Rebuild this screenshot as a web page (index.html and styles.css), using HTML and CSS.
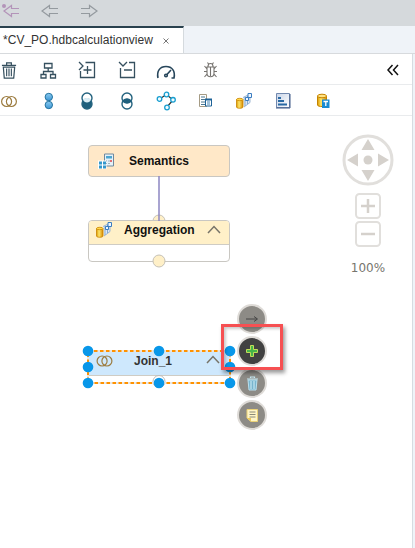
FILE: index.html
```html
<!DOCTYPE html>
<html lang="en">
<head>
<meta charset="utf-8">
<title>CV_PO.hdbcalculationview</title>
<link rel="stylesheet" href="styles.css">
</head>
<body>
<svg class="defs" width="0" height="0" aria-hidden="true">
  <defs>
    <linearGradient id="gold"><stop offset="0" stop-color="#d99a00"/><stop offset=".4" stop-color="#ffe56b"/><stop offset="1" stop-color="#d58a00"/></linearGradient>
    <linearGradient id="blue" x2="0" y2="1"><stop offset="0" stop-color="#8bcbf1"/><stop offset="1" stop-color="#3c96d4"/></linearGradient>
    <linearGradient id="list" x2="1" y2="1"><stop offset="0" stop-color="#c8d4e8"/><stop offset="1" stop-color="#fff"/></linearGradient>
    <symbol id="rings" viewBox="0 0 16 12">
      <g fill="none" stroke="#9c7c40" stroke-width="1.2"><circle cx="5.6" cy="6" r="5"/><circle cx="10.4" cy="6" r="5"/></g>
    </symbol>
    <symbol id="aggr" viewBox="0 0 16 16">
      <path d="M7 4.500 14 1v8.500L8 14" fill="#dce9f5" stroke="#9bb5d2"/>
      <path d="M9 4v9M11.500 3v8" stroke="#86a8cf"/>
      <path d="M9.500 4.500h3v3h-3zM12 .5h3.500v4H12z" fill="#eef7ff" stroke="#3b7cc0"/>
      <path d="M.5 6.500v7.500c0 1.700 6.500 1.700 6.500 0V6.500z" fill="url(#gold)" stroke="#c98400" stroke-width=".8"/>
      <ellipse cx="3.750" cy="6.500" rx="3.250" ry="1.200" fill="#ffd84c" stroke="#c98400" stroke-width=".8"/>
    </symbol>
    <symbol id="bin" viewBox="0 0 16 18">
      <path d="M.5 3.500h15M5.500 3V1h5v2" fill="none" stroke="currentColor" stroke-width="1.300"/>
      <path d="M2 5.500 3 17h10l1-11.500z" fill="none" stroke="currentColor" stroke-width="1.300"/>
      <path d="M5.500 7V15M8 7V15M10.500 7V15" stroke="currentColor" stroke-width="1.200"/>
    </symbol>
  </defs>
</svg>
<div class="window">
  <header class="navbar">
    <svg class="back last" width="18" height="14" viewBox="0 0 18 14"><path d="M17 4.500H9.500V1.500L2 7l7.500 5.500v-3H17"/><circle cx="2" cy="2" r="2"/></svg>
    <svg width="18" height="14" viewBox="0 0 18 14"><path d="M17 4.500H8.500V1.500L1 7l7.500 5.500v-3H17"/></svg>
    <svg width="18" height="14" viewBox="0 0 18 14"><path d="M1 4.500h8.500V1.500L17 7l-7.500 5.500v-3H1"/></svg>
  </header>
  <nav class="tabs">
    <div class="tab"><span class="tab-name">*CV_PO.hdbcalculationview</span><svg width="6" height="6" viewBox="0 0 6 6"><path d="M.5.5l5 5M5.500.5l-5 5"/></svg></div>
  </nav>
  <main class="editor">
    <div class="toolbar actions">
      <svg class="ico dark" viewBox="0 0 24 24"><use href="#bin" x="4" y="4" width="16" height="17"/></svg>
      <svg class="ico line" viewBox="0 0 24 24"><path d="M8.500 5.500h7.500v4.500H8.500zM5 16.500h5v3.500H5zM14.500 16.500h5v3.500h-5zM12.200 10v3.500M7.500 16.500v-3h9.500v3"/></svg>
      <svg class="ico line" viewBox="0 0 24 24"><path d="M10.500 4.500h9v15h-14V13M12.500 8v8M8.500 12h8M4 4l4 4-4 4"/></svg>
      <svg class="ico line" viewBox="0 0 24 24"><path d="M14 4.500h5.500v15h-14V10M9 12h8M4 4l4 4 4-4"/></svg>
      <svg class="ico line gauge" viewBox="0 0 24 24"><path d="M4 20C2.500 13 6 8.500 12 8.500S21.500 13 20 20h-2.500"/><path d="M12.500 17 17 12"/><circle cx="12" cy="17.500" r="1.300"/></svg>
      <svg class="ico bug" viewBox="0 0 24 24"><path d="M9 9h7v6c0 5-7 5-7 0zM12.500 9v9M10 8.500c0-4 5-4 5 0M9 11 6.500 8M16 11l2.500-3M9 13.500H6M16 13.500h3M9 16l-2.500 3M16 16l2.500 3M10.500 6 9.500 4.500M14.500 6l1-1.500"/></svg>
      <svg class="collapse" width="12" height="12" viewBox="0 0 12 12"><path d="M5.500 1 1 6l4.500 5M11 1 6.500 6l4.500 5"/></svg>
    </div>
    <div class="toolbar nodes">
      <svg class="ico" viewBox="0 0 24 24"><use href="#rings" x="4" y="6.500" width="16" height="12"/></svg>
      <svg class="ico" viewBox="0 0 24 24"><g fill="url(#blue)" stroke="#24739f"><circle cx="12.800" cy="8" r="3.700"/><circle cx="12.800" cy="16" r="3.700"/></g></svg>
      <svg class="ico" viewBox="0 0 24 24"><g fill="none" stroke="#24637f" stroke-width="1.400"><circle cx="12" cy="9" r="5"/><circle cx="12" cy="15" r="5" fill="#1f607d"/></g><path d="M8 10.500c2-2 6-2 8 0-1 4-7 4-8 0z" fill="#d9edf5"/></svg>
      <svg class="ico" viewBox="0 0 24 24"><g fill="none" stroke="#24637f" stroke-width="1.400"><circle cx="12" cy="9" r="5"/><circle cx="12" cy="15" r="5"/></g><path d="M7.500 12c2-3 7-3 9 0-2 3-7 3-9 0z" fill="#1f607d"/></svg>
      <svg class="ico" viewBox="0 0 24 24"><path d="m5.500 10 7-4.500 6.500 5.500-6 7" fill="none" stroke="#333" stroke-width="1.200"/><g fill="#effbff" stroke="#189ed0" stroke-width="1.300"><circle cx="5.500" cy="10" r="2.300"/><circle cx="12.500" cy="5.500" r="2.300"/><circle cx="19" cy="10.800" r="2.300"/><circle cx="13" cy="18.500" r="2.300"/></g></svg>
      <svg class="ico" viewBox="0 0 24 24"><path d="M6.500 5.500h7v12h-7z" fill="#fff" stroke="#a59b84"/><path d="M8 8h4M8 10.500h4M8 13h4M8 15.500h4" stroke="#4d7891"/><path d="M12.500 10.500h6v6.500h-6z" fill="#fff" stroke="#1d6297"/><path d="M12 10.500h7" stroke="#1d6297" stroke-width="2"/><path d="M14 13h3M14 15h3" stroke="#4584b6"/></svg>
      <svg class="ico" viewBox="0 0 24 24"><use href="#aggr" x="4" y="4" width="16" height="16"/></svg>
      <svg class="ico" viewBox="0 0 24 24"><path d="M5.500 4.500h13v14h-13z" fill="url(#list)" stroke="#7188ae"/><path d="M5 19h14V5" fill="none" stroke="#415b88"/><path d="M7 9h3M7 12h6M7 15.500h9" stroke="#2969a3" stroke-width="2"/></svg>
      <svg class="ico" viewBox="0 0 24 24"><path d="M6.500 7v9c0 2 9 2 9 0V7z" fill="url(#gold)" stroke="#c58300"/><ellipse cx="11" cy="7" rx="4.500" ry="1.800" fill="#ffe385" stroke="#c58300"/><path d="M11 10.500h7.500V19H11z" fill="#188bd1"/><path d="M12.500 12.500h4.500M14.800 12.500V17" stroke="#fff" stroke-width="1.300"/></svg>
    </div>
    <section class="canvas">
      <svg class="wires" width="412" height="432" viewBox="0 116 412 432">
        <circle cx="159" cy="221" r="6" class="port"/>
      </svg>
      <article class="node semantics">
        <svg width="17" height="17" viewBox="0 0 17 17"><path d="M6.500 1h9v12h-9z" fill="#e5f1f8" stroke="#71899d"/><path d="M8 3h6v2.500H8z" fill="#4ca5d1"/><path d="M8 8h1M10.500 8h1M8 10.500h1M10.500 10.500h1" stroke="#5d7685"/><path d="M13 7v2" stroke="#e23c42" stroke-width="1.500"/><path d="M0 7.500h8.500V16H0z" fill="#fff"/><path d="M1 8.500h3v3H1zM5 8.500h3v3H5zM1 12.500h3v3H1zM5 12.500h3v3H5z" fill="#3297cc"/></svg>
        <span>Semantics</span>
      </article>
      <article class="node aggregation">
        <div class="node-head"><svg width="16" height="16"><use href="#aggr"/></svg><span>Aggregation</span><svg class="caret" width="14" height="9" viewBox="0 0 14 9"><path d="m1 8 6-6.500L13 8"/></svg></div>
      </article>
      <article class="node join">
        <div class="node-head"><svg width="17" height="12"><use href="#rings"/></svg><span>Join_1</span><svg class="caret" width="14" height="9" viewBox="0 0 14 9"><path d="m1 8 6-6.500L13 8"/></svg></div>
      </article>
      <svg class="wires" width="412" height="432" viewBox="0 116 412 432">
        <path d="M159 176v45" stroke="#8c86c2" stroke-width="1.500"/>
        <circle cx="159" cy="261" r="6" class="port"/>
        <circle cx="159" cy="381.500" r="6" fill="#fff" stroke="#bbb"/>
        <path d="M88 351h142v32H88z" fill="none" stroke="#e9e6e1" stroke-width="2"/>
        <path d="M88 351h142v32H88z" fill="none" stroke="#ff9200" stroke-width="2" stroke-dasharray="3.500 2.500"/>
        <g fill="#0897e9"><circle cx="88" cy="351" r="5.300"/><circle cx="159" cy="351" r="5.300"/><circle cx="230" cy="351" r="5.300"/><circle cx="88" cy="367" r="5.300"/><circle cx="230" cy="367" r="5.300"/><circle cx="88" cy="383" r="5.300"/><circle cx="159" cy="383" r="5.300"/><circle cx="230" cy="383" r="5.300"/></g>
      </svg>
      <div class="context">
        <button aria-label="Connect"><svg width="14" height="8" viewBox="0 0 14 8"><path d="M1 4h11M9 1.500 12.500 4 9 6.500" fill="none" stroke="#444"/></svg></button>
        <button class="active" aria-label="Add"><svg width="12" height="12" viewBox="0 0 12 12"><path d="M4.500.5h3v4h4v3h-4v4h-3v-4h-4v-3h4z" fill="#45b649" stroke="#c2dc58"/></svg></button>
        <button aria-label="Delete"><svg width="13" height="15" viewBox="0 0 13 15"><path d="M2 4h9l-1 10H3z" fill="#78b4cd" stroke="#b9e0ee"/><path d="M1 3h11M4.500 2V1h4v1M5 5v8M8 5v8" fill="none" stroke="#c5e7f1" stroke-width="1.200"/></svg></button>
        <button aria-label="Note"><svg width="12" height="13" viewBox="0 0 12 13"><path d="M1 .5h10.500v12H5L1 9z" fill="#fff5c6" stroke="#ead177"/><path d="M3.500 3h6M3.500 5.500h6M3.500 8h6" stroke="#8a8a7a"/><path d="M1 9h4v3.500z" fill="#edc95b"/></svg></button>
      </div>
      <div class="highlight"></div>
      <aside class="navigator">
        <svg width="52" height="52" viewBox="0 0 52 52"><circle cx="26" cy="26" r="24" fill="none" stroke="#e1dfdc" stroke-width="3"/><circle cx="26" cy="26" r="4.500"/><path d="m26 5 6.500 11h-13zM26 47l6.500-11h-13zM5 26l11-6.500v13zM47 26l-11-6.500v13z"/></svg>
        <svg class="zoom in" width="26" height="26" viewBox="0 0 26 26"><rect x="1" y="1" width="24" height="24" rx="3.500"/><path d="M6 13h14M13 6v14"/></svg>
        <svg class="zoom out" width="26" height="26" viewBox="0 0 26 26"><rect x="1" y="1" width="24" height="24" rx="3.500"/><path d="M6 13h14"/></svg>
        <span>100%</span>
      </aside>
    </section>
  </main>
</div>
</body>
</html>
```
FILE: styles.css
```css
* { box-sizing: border-box; }
body { margin: 0; background: #eff3f8; font-family: "Liberation Sans", Arial, sans-serif; overflow: hidden; }
.defs { position: absolute; }
svg { display: block; flex-shrink: 0; }
.window { width: 415px; height: 548px; display: flex; flex-direction: column; }
.navbar { height: 26px; background: #d5d9dc; display: flex; gap: 21px; padding: 4px 0 0 2px; }
.navbar svg { fill: none; stroke: #949a9f; stroke-width: 1.2; }
.navbar .last { stroke: #b394b9; }
.navbar circle { fill: #b394b9; stroke: none; }
.tabs { height: 28px; border-bottom: 1px solid #d7dadd; }
.tab { width: 184px; height: 27px; background: #fff; border-top: 2px solid #29414e; border-right: 1px solid #d5dade; display: flex; align-items: center; padding-left: 3px; gap: 10px; }
.tab-name { font-size: 12px; line-height: 22px; padding-bottom: 2px; width: 150px; color: #333; white-space: nowrap; letter-spacing: .02px; }
.tab svg { stroke: #777; }
.editor { width: 413px; flex: 1; background: #fff; border-right: 1px solid #d6dce1; }
.toolbar { height: 31px; border-bottom: 1px solid #e9ebed; display: flex; gap: 15.2px; padding-top: 4px; margin-left: -3px; }
.ico { width: 24px; height: 24px; }
.dark { color: #36505f; }
.line { fill: none; stroke: #36505f; stroke-width: 1.3; }
.gauge { stroke: #27465b; stroke-width: 1.6; }
.bug { fill: none; stroke: #76736f; stroke-width: 1.1; margin-left: 5px; }
.collapse { fill: none; stroke: #111; stroke-width: 1.5; margin: 6px 13px 0 auto; }
.canvas { position: relative; height: 432px; }
.wires { position: absolute; left: 0; top: 0; }
.port { fill: #fff0c8; stroke: #c5c1b6; }
.node { position: absolute; width: 142px; left: 88px; border: 1px solid #c9c7c2; border-radius: 4px; font-size: 12px; font-weight: bold; color: #111; background: #fff; }
.node-head { display: flex; border-bottom: 1px solid #cfccc4; border-radius: 3px 3px 0 0; }
.semantics { top: 29px; height: 32px; background: #ffe8c8; display: flex; align-items: center; gap: 14px; padding-left: 9px; }
.aggregation { top: 104px; height: 42px; }
.aggregation .node-head { height: 24px; background: #fff0c8; padding: 1px 8px 0 7px; }
.aggregation span { margin: 1px 0 0 12px; }
.caret { fill: none; stroke: #777469; stroke-width: 1.5; margin-left: auto; }
.aggregation .caret { margin-top: 3px; }
.join { top: 235px; height: 32px; }
.join .node-head { height: 24px; background: #cee8fd; padding: 4px 9px 0 7px; }
.join .node-head > svg { margin-top: -1px; }
.join span { margin: -2px 0 0 21px; color: #333; }
.context { position: absolute; left: 237px; top: 188px; display: flex; flex-direction: column; gap: 2px; }
button { width: 30px; height: 30px; padding: 0; border: 2px solid #dedbd7; border-radius: 50%; background: #8d8b86; display: grid; place-items: center; }
.active { background: #414141; }
.highlight { position: absolute; left: 221px; top: 208px; width: 62px; height: 46px; border: 3px solid #f65052; box-shadow: 2px 3px 4px #0006, inset 2px 2px 3px #0003; }
.navigator { position: absolute; left: 342px; top: 18px; width: 52px; display: flex; flex-direction: column; align-items: center; fill: #d5d1cc; }
.zoom { fill: none; stroke: #e1dfdc; stroke-width: 2; }
.zoom path { stroke: #d5d1cc; stroke-width: 2.5; }
.in { margin-top: 7px; }
.out { margin-top: 2px; }
.navigator span { font: 12px/16px "DejaVu Sans", sans-serif; color: #77756e; margin-top: 13px; }
```
